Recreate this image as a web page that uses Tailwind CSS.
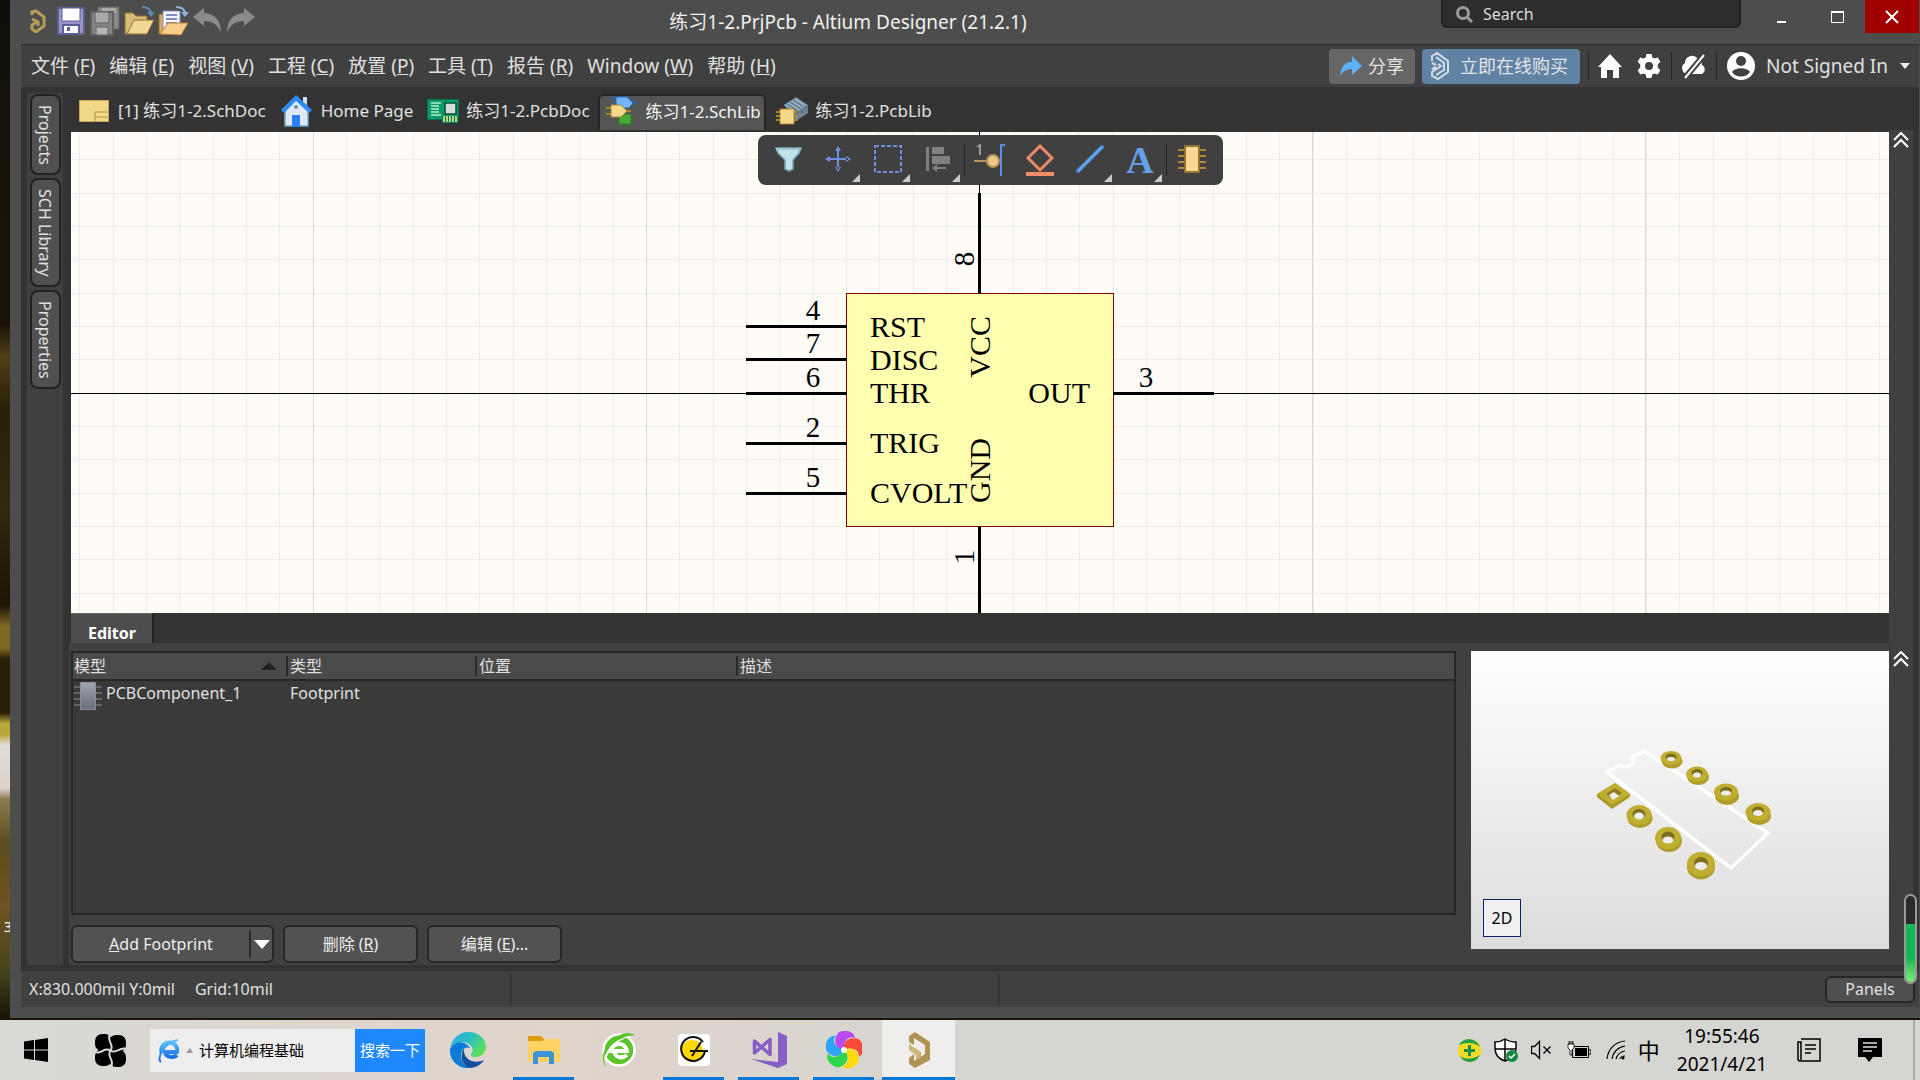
<!DOCTYPE html>
<html lang="zh-CN">
<head>
<meta charset="utf-8">
<meta name="viewport" content="width=device-width, initial-scale=1">
<title>练习1-2.PrjPcb - Altium Designer (21.2.1)</title>
<script src="https://cdn.jsdelivr.net/npm/@tailwindcss/browser@4"></script>
</head>
<body class="relative flex min-h-screen flex-col bg-[linear-gradient(#0b0f0a,#16110a_10%,#1a1206_30%,#4e3f16_33%,#2a1f08_38%,#33270e_47%,#1c1405_56%,#7c6a20_58%,#7c6a20_60%,#2a1e06_61%,#2a1e06_66%,#b8a83c_67%,#b8a83c_68%,#e2dcd6_69%,#dcd2ca_73%,#8a7a50_74%,#5d4d20_78%,#6d5420_84%,#46431c_90%,#1c1608_94%)] font-['Noto_Sans','Noto_Sans_CJK_SC',sans-serif] text-base text-[#e0e0e0]">

<!-- Desktop icon caption partly hidden by the window -->
<span class="absolute top-[917px] left-[4px] text-sm text-white">3</span>

<div class="relative ml-[10px] mb-[2px] flex flex-1 flex-col bg-[#4d4d4d]">

  <!-- Title bar -->
  <header class="flex h-[44px] items-start pl-[20px]">
    <div class="flex h-[42px] items-center">
      <svg class="mr-[11px] h-[24px] w-[16px]" viewBox="0 0 16 24" fill="none" stroke="#b89a5a" stroke-width="3"><path d="M2 6V3l4-1 8 6v9l-8 6-4-3v-4l6-4M2 10l6 3v4"/></svg>
      <button class="mr-[5px]" aria-label="保存"><svg class="h-[28px] w-[28px]" viewBox="0 0 28 28"><path d="M1 1h26v26H1z" fill="#9b95cc" stroke="#5b5f92" stroke-width="2"/><path d="M5 1h18v13H5z" fill="#fff" stroke="#5b5f92"/><path d="M6 18h16v9H6z" fill="#fafaff" stroke="#5b5f92" stroke-width="2"/><path d="M10 20h3v4h-3z" fill="#5b5f92"/></svg></button>
      <button class="mr-[4px]" aria-label="全部保存"><svg class="h-[30px] w-[30px]" viewBox="0 0 30 30"><path d="M8 1h21v22H8z" fill="#8a8a8a" stroke="#666"/><path d="M12 2h14v5H12z" fill="#aaa"/><path d="M1 6h22v23H1z" fill="#858585" stroke="#606060" stroke-width="2"/><path d="M5 6h14v11H5z" fill="#a8a8a8" stroke="#606060"/><path d="M6 21h12v8H6z" fill="#b5b5b5" stroke="#606060"/></svg></button>
      <button class="mr-[3px]" aria-label="打开工程"><svg class="h-[30px] w-[31px]" viewBox="0 0 31 30"><path d="M1 7h8l3 3h11v18H1z" fill="#d9bd77" stroke="#8d6f33"/><path d="M3 28L10 14h20l-7 14z" fill="#f1d694" stroke="#8d6f33"/><path d="M18 1c6 0 9 2 9 7" fill="none" stroke="#5d8cb5" stroke-width="2"/><path d="M23 6h8l-4 5z" fill="#5d8cb5"/></svg></button>
      <button class="mr-[4px]" aria-label="打开文档"><svg class="h-[30px] w-[31px]" viewBox="0 0 31 30"><path d="M1 8h5v20H1z" fill="#d9a55f" stroke="#8d6f33"/><path d="M5 5h17v18H5z" fill="#f6f8ff" stroke="#7c8ec2"/><path d="M8 9h11M8 13h11M8 17h11" stroke="#7c8ec2" stroke-width="2"/><path d="M2 28l8-11h20l-7 12z" fill="#f8cf8a" stroke="#b08040"/><path d="M18 1c6 0 9 2 9 7" fill="none" stroke="#8cb5d9" stroke-width="2"/><path d="M23 6h8l-4 5z" fill="#8cb5d9"/></svg></button>
      <button class="mr-[4px]" aria-label="撤销"><svg class="h-[26px] w-[29px]" viewBox="0 0 29 26"><path d="M0 9L11 0v5c11 1 17 7 17 20-3-8-8-12-17-12v5z" fill="#8b8b8b"/></svg></button>
      <button aria-label="重做"><svg class="h-[26px] w-[29px]" viewBox="0 0 29 26"><path d="M29 9L18 0v5C7 6 1 12 1 25c3-8 8-12 17-12v5z" fill="#8b8b8b"/></svg></button>
    </div>
    <h1 class="flex h-[44px] flex-1 items-center justify-center text-[19px] text-[#f0f0f0]">练习1-2.PrjPcb - Altium Designer (21.2.1)</h1>
    <label class="mr-[16px] flex h-[28px] w-[300px] items-center rounded-b-md border-2 border-t-0 border-[#222] bg-[#2d2d2d] pt-px pl-[12px]">
      <svg class="mr-[10px] h-[18px] w-[18px]" viewBox="0 0 18 18" fill="none" stroke="#9a9a9a" stroke-width="3"><circle cx="8" cy="8" r="5.500"/><path d="M12 12l5 5"/></svg>
      <input type="text" aria-label="Search" placeholder="Search" class="w-[240px] bg-transparent text-base text-[#e0e0e0] outline-none placeholder:text-[#dcdcdc]">
    </label>
    <button class="flex h-[33px] w-[54px] items-center justify-center" aria-label="最小化"><svg class="h-[14px] w-[14px]" viewBox="0 0 14 14"><path d="M0 11h9v2H0z" fill="#fff"/></svg></button>
    <button class="flex h-[33px] w-[54px] items-center justify-center" aria-label="最大化"><svg class="h-[14px] w-[14px]" viewBox="0 0 14 14"><path d="M.5 1.500h12v11H.5z" fill="none" stroke="#fff"/><path d="M0 1h13v2H0z" fill="#fff"/></svg></button>
    <button class="mr-px flex h-[33px] w-[54px] items-center justify-center bg-[#a00000]" aria-label="关闭"><svg class="h-[14px] w-[14px]" viewBox="0 0 14 14" stroke="#fff" stroke-width="2"><path d="M1 1l12 12M13 1L1 13"/></svg></button>
  </header>

  <div class="mr-px mb-[11px] ml-[11px] flex flex-1 flex-col bg-[#333]">

    <!-- Menu bar -->
    <div class="flex h-[43px] items-center border-t border-[#2c2c2c] bg-[#404040] pl-[10px] text-[19px] whitespace-nowrap">
      <nav class="flex gap-[14px]" aria-label="主菜单">
        <button>文件 (<u>F</u>)</button>
        <button>编辑 (<u>E</u>)</button>
        <button>视图 (<u>V</u>)</button>
        <button>工程 (<u>C</u>)</button>
        <button>放置 (<u>P</u>)</button>
        <button>工具 (<u>T</u>)</button>
        <button>报告 (<u>R</u>)</button>
        <button>Window (<u>W</u>)</button>
        <button>帮助 (<u>H</u>)</button>
      </nav>
      <div class="ml-auto flex items-center">
        <button class="mr-[7px] flex h-[35px] w-[86px] items-center justify-center gap-[6px] rounded bg-[#666] text-lg text-[#e4e4e4]"><svg class="h-[22px] w-[22px]" viewBox="0 0 22 22"><path d="M0 21C1 11 5 7 12 7V1l10 10-10 9v-6c-5 0-9 2-12 7z" fill="#5eb1f8"/></svg>分享</button>
        <button class="mr-[8px] flex h-[35px] w-[158px] items-center gap-[11px] rounded bg-[#5f82a5] pl-[9px] text-lg text-[#e4e4e4]"><svg class="h-[28px] w-[18px]" viewBox="0 0 18 28" fill="none" stroke="#d5dbe2" stroke-width="2"><path d="M1 9V4l5-3 11 8v11L7 27l-6-3v-4l9-6-3-2M1 11l4 2M1 17l4-2M5 5l8 6v7l-8 5"/></svg>立即在线购买</button>
        <span class="mr-[9px] h-[28px] w-px bg-[#262626]"></span>
        <button class="mr-[15px]" aria-label="主页"><svg class="h-[26px] w-[24px]" viewBox="0 0 24 26"><path d="M12 1L0 14h3v11h6v-8h6v8h6V14h3z" fill="#fff"/></svg></button>
        <button class="mr-[10px]" aria-label="设置"><svg class="h-[24px] w-[24px]" viewBox="0 0 24 24"><path fill="#fff" fill-rule="evenodd" d="M9.500 0h5l.8 3.500 2 1 3.500-1 2.500 4.300L20.800 10.500v3l2.500 2.700-2.500 4.300-3.500-1-2 1-.8 3.500h-5l-.8-3.500-2-1-3.500 1L.7 16.200l2.500-2.700v-3L.7 7.800l2.500-4.300 3.500 1 2-1zM12 8a4 4 0 100 8 4 4 0 000-8z"/></svg></button>
        <span class="mr-[8px] h-[28px] w-px bg-[#262626]"></span>
        <button class="mr-[9px]" aria-label="离线"><svg class="h-[26px] w-[27px]" viewBox="0 0 27 26"><path d="M7 21a6 6 0 01-2-11 7 7 0 0112-5 7 7 0 015 7 5 5 0 010 9z" fill="#fff"/><path d="M4 26L25 1" stroke="#404040" stroke-width="6"/><path d="M5 25L24 2" stroke="#fff" stroke-width="2"/></svg></button>
        <span class="mr-[10px] h-[28px] w-px bg-[#262626]"></span>
        <button class="flex items-center"><svg class="mr-[11px] h-[28px] w-[28px]" viewBox="0 0 28 28"><circle cx="14" cy="14" r="14" fill="#fff"/><circle cx="14" cy="9" r="5" fill="#404040"/><path d="M5 20c3-5 15-5 18 0-4 6-14 6-18 0z" fill="#404040"/></svg>Not Signed In<svg class="mr-[9px] ml-[12px] h-[6px] w-[10px]" viewBox="0 0 10 6"><path d="M0 0h10L5 6z" fill="#eee"/></svg></button>
      </div>
    </div>

    <div class="flex flex-1">
      <!-- Collapsed side panels -->
      <aside class="mx-[6px] mt-[6px] flex w-[36px] flex-col items-center gap-[3px] bg-[#404040] pt-px">
        <button class="flex h-[81px] w-[31px] items-center justify-center rounded-lg border-2 border-[#222] bg-[#505050] [writing-mode:vertical-rl] text-base whitespace-nowrap">Projects</button>
        <button class="flex h-[109px] w-[31px] items-center justify-center rounded-lg border-2 border-[#222] bg-[#505050] [writing-mode:vertical-rl] text-base whitespace-nowrap">SCH Library</button>
        <button class="flex h-[99px] w-[31px] items-center justify-center rounded-lg border-2 border-[#222] bg-[#505050] [writing-mode:vertical-rl] text-base whitespace-nowrap">Properties</button>
      </aside>

      <main class="flex min-w-0 flex-1 flex-col">
        <!-- Document tabs -->
        <div class="flex h-[43px] items-end text-[17px] whitespace-nowrap" role="tablist">
          <button role="tab" class="flex h-[36px] items-center pb-[2px] pl-[10px]"><svg class="mr-[9px] h-[22px] w-[30px]" viewBox="0 0 30 22"><path d="M.5.5h29v21H.5z" fill="#f2d987" stroke="#c2a75a"/><path d="M16 21v-9h13M16 17h13" fill="none" stroke="#a98f48"/></svg>[1] 练习1-2.SchDoc</button>
          <button role="tab" class="flex h-[36px] items-center pb-[2px] pl-[15px]"><svg class="mr-[9px] h-[32px] w-[31px]" viewBox="0 0 31 32"><path d="M22 2h4v9h-4z" fill="#cfe0ec"/><path d="M4 14L15 4l12 10v17H4z" fill="#dfe8f6" stroke="#7aa5bd" stroke-width="1.500"/><path d="M0 15L15 0l16 15-3 3L15 6 3 18z" fill="#2b8cf4"/><circle cx="15" cy="12" r="2" fill="#6d93a5"/><path d="M11 20h8v12h-8z" fill="#2b7fee"/></svg>Home Page</button>
          <button role="tab" class="flex h-[36px] items-center pb-[2px] pl-[14px]"><svg class="mr-[7px] h-[26px] w-[32px]" viewBox="0 0 32 26"><path d="M.5 1.500h31v22H16v-2H.5z" fill="#0a9b6a" stroke="#0c6b4c"/><path d="M4 5h10M4 8h8M4 11h8M4 14h8M4 17h10" stroke="#b8f0c8" stroke-width="1.500"/><path d="M18 5h11v11H18z" fill="#d5dcd8" stroke="#064d38" stroke-width="1.500"/><path d="M15 18h16v7H15z" fill="#0a7c50"/><path d="M17 18v6M20 18v6M23 18v6M26 18v6M29 18v6" stroke="#f4f29a" stroke-width="1.500"/></svg>练习1-2.PcbDoc</button>
          <button role="tab" aria-selected="true" class="ml-[8px] flex h-[36px] w-[168px] items-center rounded-t-md border-2 border-b-0 border-[#262626] bg-[#555] pb-[2px] pl-[6px] text-[#f2f2f2]"><svg class="mr-[9px] h-[32px] w-[31px]" viewBox="0 0 31 32"><path d="M13 18h12v10H13z" fill="#4aa83a" stroke="#2d7a22"/><path d="M15 28v3M18 28v3M21 28v3M24 28v3M25 20h3M25 24h3" stroke="#2d7a22"/><path d="M5 2h5M26 6h5" stroke="#2668b8" stroke-width="2"/><path d="M10 1h11l6 6-4 5H10z" fill="#73b4fa" stroke="#2668b8"/><path d="M0 12h6M0 18h6M20 15h5" stroke="#a98230" stroke-width="2"/><path d="M5 9h10l6 6-6 6H5z" fill="#f5d98a" stroke="#a98230"/></svg>练习1-2.SchLib</button>
          <button role="tab" class="flex h-[36px] items-center pb-[2px] pl-[10px]"><svg class="mr-[8px] h-[28px] w-[32px]" viewBox="0 0 32 28"><path d="M8 8L20 0l12 8v8L20 24z" fill="#6d8398"/><path d="M8 8L20 1l11 7-11 8z" fill="#93aabc"/><path d="M11 7l11 7M14 5l11 7M17 3l11 7M22 18v-4M26 16v-4M30 13V9" stroke="#4d6072"/><path d="M0 15h22M0 19h22M0 23h22" stroke="#a98230" stroke-width="2"/><path d="M4 12h14v15H4z" fill="#f5d98a" stroke="#a98230"/></svg>练习1-2.PcbLib</button>
        </div>

        <div class="flex flex-1">
          <div class="flex min-w-0 flex-1 flex-col">
            <!-- Schematic canvas, origin at the horizontal centre -->
            <section class="relative mt-[2px] ml-[2px] min-h-[481px] flex-1 overflow-hidden bg-[#fffcf8]">
              <svg class="absolute inset-0 h-full w-full" role="img" aria-label="原理图符号">
                <defs>
                  <pattern id="grid" width="100" height="100" patternUnits="userSpaceOnUse"><path d="M0 0h1v100H0zM34 0h1v100h-1zM67 0h1v100h-1zM0 0h100v1H0zM0 33h100v1H0zM0 66h100v1H0z" fill="#ededea"/></pattern>
                </defs>
                <svg x="50%" y="261" overflow="visible">
                 <g transform="translate(-1 0)">
                  <rect x="-2000" y="-300" width="4000" height="1600" fill="url(#grid)"/>
                  <path shape-rendering="crispEdges" d="M-666-300h1v1600h-1zM-333-300h1v1600h-1zM333-300h1v1600h-1zM666-300h1v1600h-1z" fill="#d9d9d6"/>
                  <path shape-rendering="crispEdges" d="M-2000 0h4000v1h-4000zM0-300h1v1600h-1z" fill="#000"/>
                  <rect x="-132.500" y="-99.500" width="267" height="233" fill="#ffffb0" stroke="#800000"/>
                  <path shape-rendering="crispEdges" d="M-233-66.500h101M-233-33.500h101M-233 .5h101M-233 50.500h101M-233 100.500h101M134 .5h101M.5-200v101M.5 133v400" stroke="#000" stroke-width="3"/>
                  <g font-family="'Liberation Serif',serif" font-size="30" fill="#000">
                    <g>
                      <text x="-109" y="-56">RST</text><text x="-109" y="-23">DISC</text><text x="-109" y="10">THR</text><text x="-109" y="60">TRIG</text><text x="-109" y="110">CVOLT</text>
                      <text x="111" y="10" text-anchor="end">OUT</text>
                      <text transform="translate(11 -77) rotate(-90)" text-anchor="end">VCC</text>
                      <text transform="translate(11 110) rotate(-90)">GND</text>
                    </g>
                    <g text-anchor="middle" font-size="29">
                      <text x="-166" y="-73">4</text><text x="-166" y="-40">7</text><text x="-166" y="-6">6</text><text x="-166" y="44">2</text><text x="-166" y="94">5</text><text x="167" y="-6">3</text>
                      <text transform="translate(-5 -134) rotate(-90)">8</text>
                      <text transform="translate(-5 164) rotate(-90)">1</text>
                    </g>
                  </g>
                 </g>
                </svg>
              </svg>
              <div class="absolute top-[3px] left-1/2 -ml-[222px] flex h-[50px] w-[465px] items-center rounded-lg bg-[#404040] pl-[5px]" role="toolbar" aria-label="活动栏">
                <button class="relative flex h-full w-[50px] items-center justify-center pb-[2px]" aria-label="筛选"><svg class="h-[26px] w-[28px]" viewBox="0 0 28 26"><path d="M2 2h25l-2 5-6 7v9l-4 2-4-2v-9L4 7z" fill="#c3e3ea" stroke="#7aa3b2" stroke-width="1.500"/><path d="M2 2h25v2H2z" fill="#9cc6d2"/></svg></button>
                <button class="relative flex h-full w-[50px] items-center justify-center pb-[2px]" aria-label="移动"><svg class="h-[26px] w-[26px]" viewBox="0 0 26 26" fill="#6f8fe0"><path d="M12 3h2v20h-2zM3 12h20v2H3zM13 0l3 5h-6zM13 26l3-5h-6zM0 13l5-3v6zM26 13l-5-3v6z"/></svg><svg class="absolute right-[3px] bottom-[3px] h-[8px] w-[8px]" viewBox="0 0 8 8"><path d="M8 0v8H0z" fill="#ccc"/></svg></button>
                <button class="relative flex h-full w-[50px] items-center justify-center pb-[2px]" aria-label="选择"><svg class="h-[28px] w-[28px]" viewBox="0 0 28 28"><path d="M1 1h26v26H1z" fill="none" stroke="#6f8fe0" stroke-width="2" stroke-dasharray="4 2"/></svg><svg class="absolute right-[3px] bottom-[3px] h-[8px] w-[8px]" viewBox="0 0 8 8"><path d="M8 0v8H0z" fill="#ccc"/></svg></button>
                <button class="relative flex h-full w-[50px] items-center justify-center pb-[2px]" aria-label="对齐"><svg class="h-[26px] w-[26px]" viewBox="0 0 26 26" fill="#808080"><path d="M1 1h3v24H1zM7 1h12v7H7zM7 10h18v8H7zM7 22l5-4v3h9v2h-9v3z"/></svg><svg class="absolute right-[3px] bottom-[3px] h-[8px] w-[8px]" viewBox="0 0 8 8"><path d="M8 0v8H0z" fill="#ccc"/></svg></button>
                <span class="ml-px h-[32px] w-px bg-[#222]"></span>
                <button class="relative flex h-full w-[50px] items-center justify-center" aria-label="放置管脚"><svg class="h-[32px] w-[32px]" viewBox="0 0 32 32"><path d="M3 3l3-2v10" fill="none" stroke="#999" stroke-width="2"/><path d="M0 16h13v2H0z" fill="#b5935a"/><circle cx="19" cy="17" r="6" fill="#efc98a" stroke="#b5935a" stroke-width="2"/><path d="M31 1h-4v31" fill="none" stroke="#5b8ee0" stroke-width="2"/></svg></button>
                <button class="relative flex h-full w-[50px] items-center justify-center" aria-label="放置IEEE符号"><svg class="h-[32px] w-[28px]" viewBox="0 0 28 32"><path d="M14 2l12 12-12 12L2 14z" fill="none" stroke="#ee8b68" stroke-width="3"/><path d="M0 28h28v4H0z" fill="#ee8b68"/></svg></button>
                <button class="relative flex h-full w-[50px] items-center justify-center pb-[2px]" aria-label="放置线"><svg class="h-[28px] w-[28px]" viewBox="0 0 28 28"><path d="M2 26L26 2" stroke="#4a86cc" stroke-width="4" stroke-linecap="round"/><path d="M2 26L26 2" stroke="#6aa9ee" stroke-width="2"/></svg><svg class="absolute right-[3px] bottom-[3px] h-[8px] w-[8px]" viewBox="0 0 8 8"><path d="M8 0v8H0z" fill="#ccc"/></svg></button>
                <button class="relative flex h-full w-[50px] items-center justify-center font-['Liberation_Serif',serif] text-[38px] font-bold leading-none text-[#64a0e8]" aria-label="放置文本">A<svg class="absolute right-[3px] bottom-[3px] h-[8px] w-[8px]" viewBox="0 0 8 8"><path d="M8 0v8H0z" fill="#ccc"/></svg></button>
                <span class="ml-px h-[32px] w-px bg-[#222]"></span>
                <button class="relative flex h-full w-[50px] items-center justify-center pb-[2px]" aria-label="放置器件"><svg class="h-[28px] w-[28px]" viewBox="0 0 28 28"><path d="M0 5h28M0 11h28M0 17h28M0 23h28" stroke="#a98a3c" stroke-width="2"/><path d="M7 1h14v26H7z" fill="#f8d893" stroke="#8f7230" stroke-width="2"/></svg></button>
              </div>
            </section>

            <!-- Model editor -->
            <div class="flex h-[30px] items-end">
              <h2 class="ml-[2px] flex h-[30px] w-[83px] items-center justify-center border-t border-r-2 border-t-[#666] border-r-[#222] bg-[#4d4d4d] pt-[8px] pl-px text-base font-bold text-white">Editor</h2>
            </div>
            <section class="flex h-[322px] bg-[#404040] pl-[2px]">
              <div class="flex flex-1 flex-col">
                <div class="mt-[8px] mr-[15px] h-[264px] border-2 border-[#262626] bg-[#3a3a3a]">
                  <table class="w-full table-fixed border-collapse text-left text-base">
                    <thead class="h-[27px] border-b-2 border-[#262626] bg-[#4a4a4a]">
                      <tr class="font-normal">
                        <th class="w-[215px] p-0 font-normal"><div class="flex h-[20px] items-center justify-between border-r-2 border-[#2a2a2a] pr-[9px] pl-px">模型<svg class="h-[8px] w-[16px]" viewBox="0 0 16 8"><path d="M8 0l8 8H0z" fill="#222"/></svg></div></th>
                        <th class="w-[189px] p-0 font-normal"><div class="flex h-[20px] items-center border-r-2 border-[#2a2a2a] pl-[2px]">类型</div></th>
                        <th class="w-[261px] p-0 font-normal"><div class="flex h-[20px] items-center border-r-2 border-[#2a2a2a] pl-[2px]">位置</div></th>
                        <th class="p-0 font-normal"><div class="flex h-[20px] items-center pl-[2px]">描述</div></th>
                      </tr>
                    </thead>
                    <tbody>
                      <tr class="h-[30px]">
                        <td class="p-0"><div class="flex items-start pl-px"><svg class="mt-px mr-[4px] h-[28px] w-[28px]" viewBox="0 0 28 28"><defs><linearGradient id="chip" x1="0" y1="0" x2="0" y2="1"><stop offset="0" stop-color="#a2a5ac"/><stop offset="1" stop-color="#666c78"/></linearGradient></defs><path d="M0 5h28M0 11h28M0 17h28M0 23h28" stroke="#5d6670" stroke-width="2"/><path d="M6.500.5h15v27h-15z" fill="url(#chip)" stroke="#8a8f99"/></svg><span class="leading-[24px]">PCBComponent_1</span></div></td>
                        <td class="p-0 pl-[2px] align-top leading-[24px]">Footprint</td><td></td><td></td>
                      </tr>
                    </tbody>
                  </table>
                </div>
                <div class="mt-[10px] flex gap-[9px] text-base text-[#eee]">
                  <div class="flex h-[38px] w-[203px] rounded-md border-2 border-[#262626] bg-[#525252]">
                    <button class="flex-1"><u>A</u>dd Footprint</button>
                    <span class="my-[3px] w-[2px] bg-[#2a2a2a]"></span>
                    <button class="flex w-[21px] items-center justify-center" aria-label="更多"><svg class="h-[9px] w-[16px]" viewBox="0 0 16 9"><path d="M0 0h16L8 9z" fill="#fff"/></svg></button>
                  </div>
                  <button class="h-[38px] w-[135px] rounded-md border-2 border-[#262626] bg-[#525252]">删除 (<u>R</u>)</button>
                  <button class="h-[38px] w-[135px] rounded-md border-2 border-[#262626] bg-[#525252]">编辑 (<u>E</u>)...</button>
                </div>
              </div>
              <div class="relative mt-[8px] flex h-[298px] w-[418px] items-end bg-gradient-to-b from-white to-[#dcdcdc] p-[12px]">
                <svg class="absolute inset-0 h-full w-full" viewBox="0 0 418 298" role="img" aria-label="封装三维预览">
                  <path d="M136 121l13-7c8 4 16-1 12-8l12-6 124 82-37 35z" fill="none" stroke="#fff" stroke-width="3.500"/>
                  <path d="M126 143l18-11 15 11v3l-18 12-15-12z" fill="#a8992a"/><path d="M126 143l18-11 15 11-18 11z" fill="#c0ae30"/><path d="M135 143l9-6 7 5-9 6z" fill="#8c7c26"/><path d="M138 144l5-3 5 4-6 4z" fill="#eee"/>
                  <g fill="#ae9d2b"><ellipse cx="201" cy="110" rx="10.500" ry="7.500"/><ellipse cx="227" cy="126" rx="11" ry="8"/><ellipse cx="256" cy="145" rx="12" ry="9"/><ellipse cx="288" cy="165" rx="12" ry="9"/><ellipse cx="169" cy="167" rx="12.500" ry="10"/><ellipse cx="198" cy="190" rx="13" ry="11"/><ellipse cx="230" cy="216" rx="14" ry="12.500"/></g>
                  <g fill="#c0ae30"><ellipse cx="200" cy="107" rx="10.500" ry="7"/><ellipse cx="226" cy="123" rx="11" ry="7.500"/><ellipse cx="255" cy="141" rx="12" ry="8.500"/><ellipse cx="287" cy="161" rx="12.500" ry="9"/><ellipse cx="168" cy="164" rx="12.500" ry="10"/><ellipse cx="197" cy="187" rx="13" ry="11"/><ellipse cx="230" cy="213" rx="14" ry="12"/></g>
                  <g fill="#7c6e1c"><ellipse cx="200" cy="106" rx="5.500" ry="3.500"/><ellipse cx="226" cy="122" rx="5.500" ry="4"/><ellipse cx="255" cy="140" rx="6" ry="4"/><ellipse cx="287" cy="160" rx="6" ry="4.500"/><ellipse cx="168" cy="163" rx="6.500" ry="5"/><ellipse cx="197" cy="186" rx="6.500" ry="5.500"/><ellipse cx="230" cy="212" rx="7" ry="6"/></g>
                  <g fill="#eee"><ellipse cx="200" cy="108" rx="4" ry="2"/><ellipse cx="226" cy="124" rx="4" ry="2.500"/><ellipse cx="255" cy="142" rx="5" ry="2.500"/><ellipse cx="287" cy="162" rx="5" ry="3"/><ellipse cx="168" cy="165" rx="5" ry="3.500"/><ellipse cx="197" cy="189" rx="5.500" ry="3.500"/><ellipse cx="230" cy="215" rx="6" ry="4"/></g>
                </svg>
                <button class="relative h-[38px] w-[38px] border border-[#0a246a] bg-[#f0f0f0] text-base text-black">2D</button>
              </div>
            </section>
          </div>
          <!-- Collapse strip -->
          <div class="mr-[6px] flex w-[24px] flex-col justify-between bg-[#404040]">
            <button class="mt-[2px] ml-[4px]" aria-label="折叠画布"><svg class="h-[16px] w-[16px]" viewBox="0 0 16 16" fill="none" stroke="#fff" stroke-width="2"><path d="M1 8l7-7 7 7M1 15l7-7 7 7"/></svg></button>
            <button class="mb-[298px] ml-[4px]" aria-label="折叠编辑器"><svg class="h-[16px] w-[16px]" viewBox="0 0 16 16" fill="none" stroke="#fff" stroke-width="2"><path d="M1 8l7-7 7 7M1 15l7-7 7 7"/></svg></button>
          </div>
        </div>
      </main>
    </div>

    <!-- Status bar -->
    <footer class="relative mt-[6px] flex h-[36px] items-center bg-[#404040] pl-[8px] text-base">
      <div class="flex w-[481px] gap-[20px]"><span>X:830.000mil Y:0mil</span><span>Grid:10mil</span></div>
      <span class="h-[32px] w-[2px] bg-[#363636]"></span>
      <span class="ml-[486px] h-[32px] w-[2px] bg-[#363636]"></span>
      <button class="mr-[4px] ml-auto h-[27px] w-[90px] rounded-md border-2 border-[#262626] bg-[#505050] text-base leading-none">Panels</button>
      <div class="absolute right-[2px] bottom-[23px] flex h-[90px] w-[13px] items-end overflow-hidden rounded-full border-2 border-[#999] bg-[#2a2a2a]"><div class="h-[58px] w-full bg-gradient-to-b from-[#12b858] from-60% to-[#74f07a]"></div></div>
    </footer>
  </div>
</div>

<!-- Taskbar -->
<div class="flex h-[60px] items-center bg-gradient-to-r from-[#d9d9d6] via-[#e0d4cb] via-30% to-[#d5d5d1] to-50% text-black">
  <button class="ml-[24px] mr-[46px]" aria-label="开始"><svg class="h-[24px] w-[24px]" viewBox="0 0 24 24"><path d="M0 3.500L10 2v9.500H0zM11 2L24 0v11.500H11zM0 12.500h10V22L0 20.500zM11 12.500h13V24l-13-2z"/></svg></button>
  <button class="mr-[23px]" aria-label="启动器"><svg class="h-[33px] w-[33px]" viewBox="0 0 33 33"><rect x="1" y="0" width="17" height="17" rx="7"/><rect x="15" y="1" width="17" height="17" rx="7"/><rect x="1" y="15" width="17" height="17" rx="7"/><rect x="15" y="16" width="17" height="17" rx="7"/><path d="M16.500 16.500C21 10 12 8 16 0M16.500 16.500C23 21 25 12 33 15M16.500 16.500C12 23 21 25 17 33M16.500 16.500C10 12 8 21 0 18" fill="none" stroke="#d9d9d6" stroke-width="2"/></svg></button>
  <form class="mr-[25px] flex h-[51px] items-center text-[15px]">
    <div class="flex h-[43px] w-[205px] items-center bg-[#eee] pl-[8px]">
      <svg class="h-[25px] w-[23px]" viewBox="0 0 23 25"><defs><linearGradient id="ie" x1="0" y1="0" x2="0" y2="1"><stop offset="0" stop-color="#5cc0f5"/><stop offset="1" stop-color="#1a6fea"/></linearGradient></defs><path d="M4 15a8 7.500 0 1115-1H7c1 6 9 6 12 3" fill="none" stroke="url(#ie)" stroke-width="4"/><path d="M3 24c-5-3 3-20 17-22" fill="none" stroke="url(#ie)" stroke-width="2"/></svg>
      <svg class="mx-[5px] h-[5px] w-[7px] shrink-0" viewBox="0 0 7 5"><path d="M0 5h7L4 0z" fill="#999"/></svg>
      <input type="text" aria-label="搜索" value="计算机编程基础" class="ml-[1px] w-[150px] bg-transparent text-[15px] outline-none">
    </div>
    <button type="button" class="h-[43px] w-[70px] bg-[#1f88fe] text-[15px] whitespace-nowrap text-white">搜索一下</button>
  </form>
  <div class="flex h-full">
    <button class="mr-[2px] flex w-[61px] items-center justify-center pr-[25px]" aria-label="Edge"><svg class="h-[36px] w-[36px] shrink-0" viewBox="0 0 36 36"><defs><linearGradient id="eg" x1="0" y1="0" x2="1" y2=".5"><stop offset="0" stop-color="#2fa8ea"/><stop offset=".6" stop-color="#2cc3bd"/><stop offset="1" stop-color="#5cdf5a"/></linearGradient></defs><path d="M0 16C2 6 10 0 18 0c11 0 18 7 18 15 0 7-6 10-11 10-4 0-5-2-3-4 2-3 0-8-5-10C10 9 3 11 0 16z" fill="url(#eg)"/><path d="M0 17c3-6 9-8 14-6 3 1 5 3 6 5-5-2-9 2-9 8 0 5 3 9 8 12C8 37-1 28 0 17z" fill="#0b7bd6"/><path d="M14 17c-5 6-2 16 5 19 6 0 12-3 15-8-8 4-21 1-20-11z" fill="#124f9c"/></svg></button>
    <button class="mr-[14px] flex w-[61px] items-center justify-center border-b-[3px] border-[#0078d7] pt-[3px]" aria-label="文件资源管理器"><svg class="h-[28px] w-[32px]" viewBox="0 0 32 28"><path d="M0 0h13l3 3v4H0z" fill="#e09b0a"/><path d="M0 5h14l3-2h15v23H0z" fill="#fed265"/><path d="M5 28V17l3-2h15l3 2v11h-5v-7H10v7z" fill="#3b93d9"/></svg></button>
    <button class="mr-[14px] flex w-[61px] items-center justify-center" aria-label="浏览器"><svg class="h-[36px] w-[34px]" viewBox="0 0 34 36"><circle cx="17" cy="18" r="15.500" fill="#5ac42a" stroke="#fff" stroke-width="2.500"/><path d="M9 21a8 8 0 1116-2H12c1 7 8 8 13 4" fill="none" stroke="#fff" stroke-width="4"/><path d="M5 35C-3 29 6 5 33 3 22-3 2 8 1 26c0 4 1 8 4 9z" fill="#5ac42a"/><path d="M5 32C2 24 12 8 30 4 17 5 5 14 3 26z" fill="#fff"/></svg></button>
    <button class="mr-[14px] flex w-[61px] items-center justify-center border-b-[3px] border-[#0078d7] pt-[3px]" aria-label="格式工厂"><svg class="h-[32px] w-[32px]" viewBox="0 0 32 32"><rect width="32" height="32" rx="4" fill="#fff"/><circle cx="14" cy="17" r="11" fill="#ffd800"/><path d="M25 8A12 12 0 1027 17H13M23 8l-9 14M12 17h18" fill="none" stroke="#111" stroke-width="2"/></svg></button>
    <button class="mr-[14px] flex w-[61px] items-center justify-center border-b-[3px] border-[#0078d7] pt-[3px]" aria-label="Visual Studio"><svg class="h-[36px] w-[36px]" viewBox="0 0 36 36"><path d="M27 0l9 4v28l-9 4L0 27l27 3z" fill="#865fc5"/><path d="M3.500 9v12L19 7.500v15z" fill="none" stroke="#865fc5" stroke-width="3.500" stroke-linejoin="round"/></svg></button>
    <button class="mr-[8px] flex w-[61px] items-center justify-center border-b-[3px] border-[#0078d7] pt-[3px]" aria-label="音乐"><svg class="h-[38px] w-[36px]" viewBox="-18 -19 36 38"><path d="M0 0C-9-1-12-10-5-18 3-21 10-18 11-12 5-15-1-9 0 0z" fill="#b94bf0"/><path transform="rotate(72)" d="M0 0C-9-1-12-10-5-18 3-21 10-18 11-12 5-15-1-9 0 0z" fill="#ff4a38"/><path transform="rotate(144)" d="M0 0C-9-1-12-10-5-18 3-21 10-18 11-12 5-15-1-9 0 0z" fill="#ffda0c"/><path transform="rotate(216)" d="M0 0C-9-1-12-10-5-18 3-21 10-18 11-12 5-15-1-9 0 0z" fill="#2fd64a"/><path transform="rotate(288)" d="M0 0C-9-1-12-10-5-18 3-21 10-18 11-12 5-15-1-9 0 0z" fill="#2ea4f8"/><circle r="3" fill="#fff"/></svg></button>
    <button class="flex w-[73px] items-center justify-center border-b-[3px] border-[#0078d7] bg-[#efeeec] pt-[3px]" aria-label="Altium Designer"><svg class="h-[36px] w-[22px]" viewBox="0 0 22 36"><path d="M7 0l15 10v18L7 36l-6-4v-6l5-4v7l11-7V13L6 6v7l-5-3V4z" fill="#b09453"/><path d="M1 12l12 8v5l-5 3v-5l-7-5z" fill="#cdb67c"/></svg></button>
  </div>
  <div class="ml-auto flex h-full items-center">
    <svg class="mr-[13px] h-[23px] w-[23px]" viewBox="0 0 23 23"><circle cx="11.500" cy="11.500" r="11.500" fill="#f9d923"/><path d="M1 6C5-2 18-2 22 8 17 3 8 3 1 6zM22 16c-4 9-16 9-20 1 6 4 14 3 20-1z" fill="#1fa04c"/><path d="M10 6h3v4h4v3h-4v4h-3v-4H6v-3h4z" fill="#12924a"/></svg>
    <svg class="mr-[13px] h-[24px] w-[24px]" viewBox="0 0 24 24"><path d="M11 1c3 2 7 3 11 3v6c0 7-5 11-11 13C5 21 1 17 1 10V4c3 0 7-1 10-3z" fill="#fff" stroke="#000" stroke-width="1.500"/><path d="M11 1v22M1 11h21" stroke="#000" stroke-width="1.500"/><circle cx="18" cy="18" r="6" fill="#128a43"/><path d="M15 18l2 2 4-4" fill="none" stroke="#fff" stroke-width="1.500"/></svg>
    <svg class="mr-[15px] h-[20px] w-[21px]" viewBox="0 0 21 20" fill="none" stroke="#000"><path d="M.5 6.500h3l5-5v17l-5-5h-3zM12.500 6.500l7 7M19.500 6.500l-7 7" stroke-width="1.300"/></svg>
    <svg class="mr-[15px] h-[18px] w-[24px]" viewBox="0 0 24 18"><path d="M5.500 5.500h16v11h-16zM22 9h2v4h-2" fill="none" stroke="#000"/><path d="M8 7h12v8H8z"/><path d="M1 3h6v4l-2 2v5H3V9L1 7zM2 0h1v3H2zM5 0h1v3H5z" fill="#fff" stroke="#000" stroke-width=".8"/></svg>
    <svg class="mr-[13px] h-[20px] w-[19px]" viewBox="0 0 19 20" fill="none" stroke="#000"><path d="M1 19C2 9 9 2 19 1M6 19C7 12 12 7 19 6M10 19c1-4 4-7 9-8M14 19c0-1 2-3 5-3" stroke-width="1.200"/><circle cx="17" cy="18" r="1.500" fill="#000" stroke="none"/></svg>
    <button class="mr-[17px] text-[22px] leading-none">中</button>
    <time class="mr-[30px] text-center text-[19px] leading-[28px]">19:55:46<br>2021/4/21</time>
    <button class="mr-[37px]" aria-label="资讯"><svg class="h-[24px] w-[24px]" viewBox="0 0 24 24" fill="none" stroke="#000" stroke-width="1.500"><path d="M4 1h19v22H3c-2 0-2-1-2-2V4h3v18M8 7h11M8 11h11M8 15h6"/></svg></button>
    <button class="mr-[31px]" aria-label="通知"><svg class="h-[24px] w-[24px]" viewBox="0 0 24 24"><path d="M0 0h24v19h-9l-4 5-4-5H0z"/><path d="M5 5h14M5 9h14M5 13h9" stroke="#e0e0dc" stroke-width="1.300"/></svg></button>
    <span class="mr-[5px] h-full w-[2px] bg-[#aaa]"></span>
  </div>
</div>
</body>
</html>
